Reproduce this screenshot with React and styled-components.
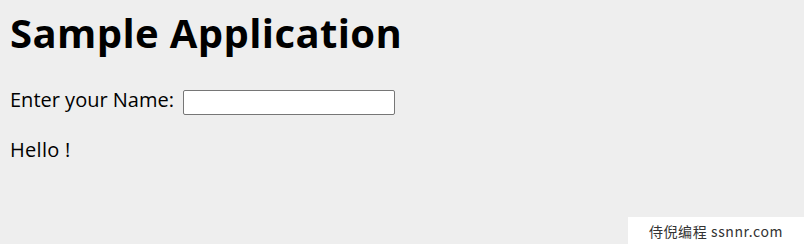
import React, { useState } from "react";
import styled, { createGlobalStyle } from "styled-components";

const GlobalStyle = createGlobalStyle`
  html, body {
    margin: 0;
    padding: 0;
    background: #eeeeee;
  }
  body {
    font-family: "Open Sans", "Noto Sans", sans-serif;
    color: #000;
  }
`;

const Page = styled.div`
  min-height: 244px;
  padding: 9px 10px 8px;
  box-sizing: border-box;
`;

const Title = styled.h1`
  margin: 0;
  font-size: 40px;
  line-height: 48px;
  font-weight: 700;
  letter-spacing: 0.4px;
`;

const Row = styled.div`
  display: flex;
  align-items: flex-start;
  gap: 9px;
  margin-top: 29px;
  font-size: 20px;
  line-height: 27px;
`;

const NameInput = styled.input`
  width: 212px;
  height: 25px;
  margin-top: 4px;
  box-sizing: border-box;
  border: 1px solid #767676;
  border-radius: 2px;
  background: #fff;
  padding: 1px 3px;
  font-size: 14px;
  outline: none;
`;

const Greeting = styled.p`
  margin: 21px 0 0;
  font-size: 20px;
  line-height: 27px;
  letter-spacing: 0.3px;
`;

const Watermark = styled.div`
  position: fixed;
  right: 0;
  bottom: 0;
  width: 176px;
  height: 27px;
  background: #fff;
  color: #333;
  display: flex;
  align-items: center;
  justify-content: center;
  font-family: "Noto Sans CJK SC", "Noto Sans", sans-serif;
  font-size: 14px;
  letter-spacing: 0.6px;
`;

export default function App() {
  const [name, setName] = useState("");
  return (
    <>
      <GlobalStyle />
      <Page>
        <Title>Sample Application</Title>
        <Row>
          <label htmlFor="name">Enter your Name:</label>
          <NameInput id="name" value={name} onChange={(e) => setName(e.target.value)} />
        </Row>
        <Greeting>Hello {name}!</Greeting>
      </Page>
      <Watermark>侍倪编程 ssnnr.com</Watermark>
    </>
  );
}
